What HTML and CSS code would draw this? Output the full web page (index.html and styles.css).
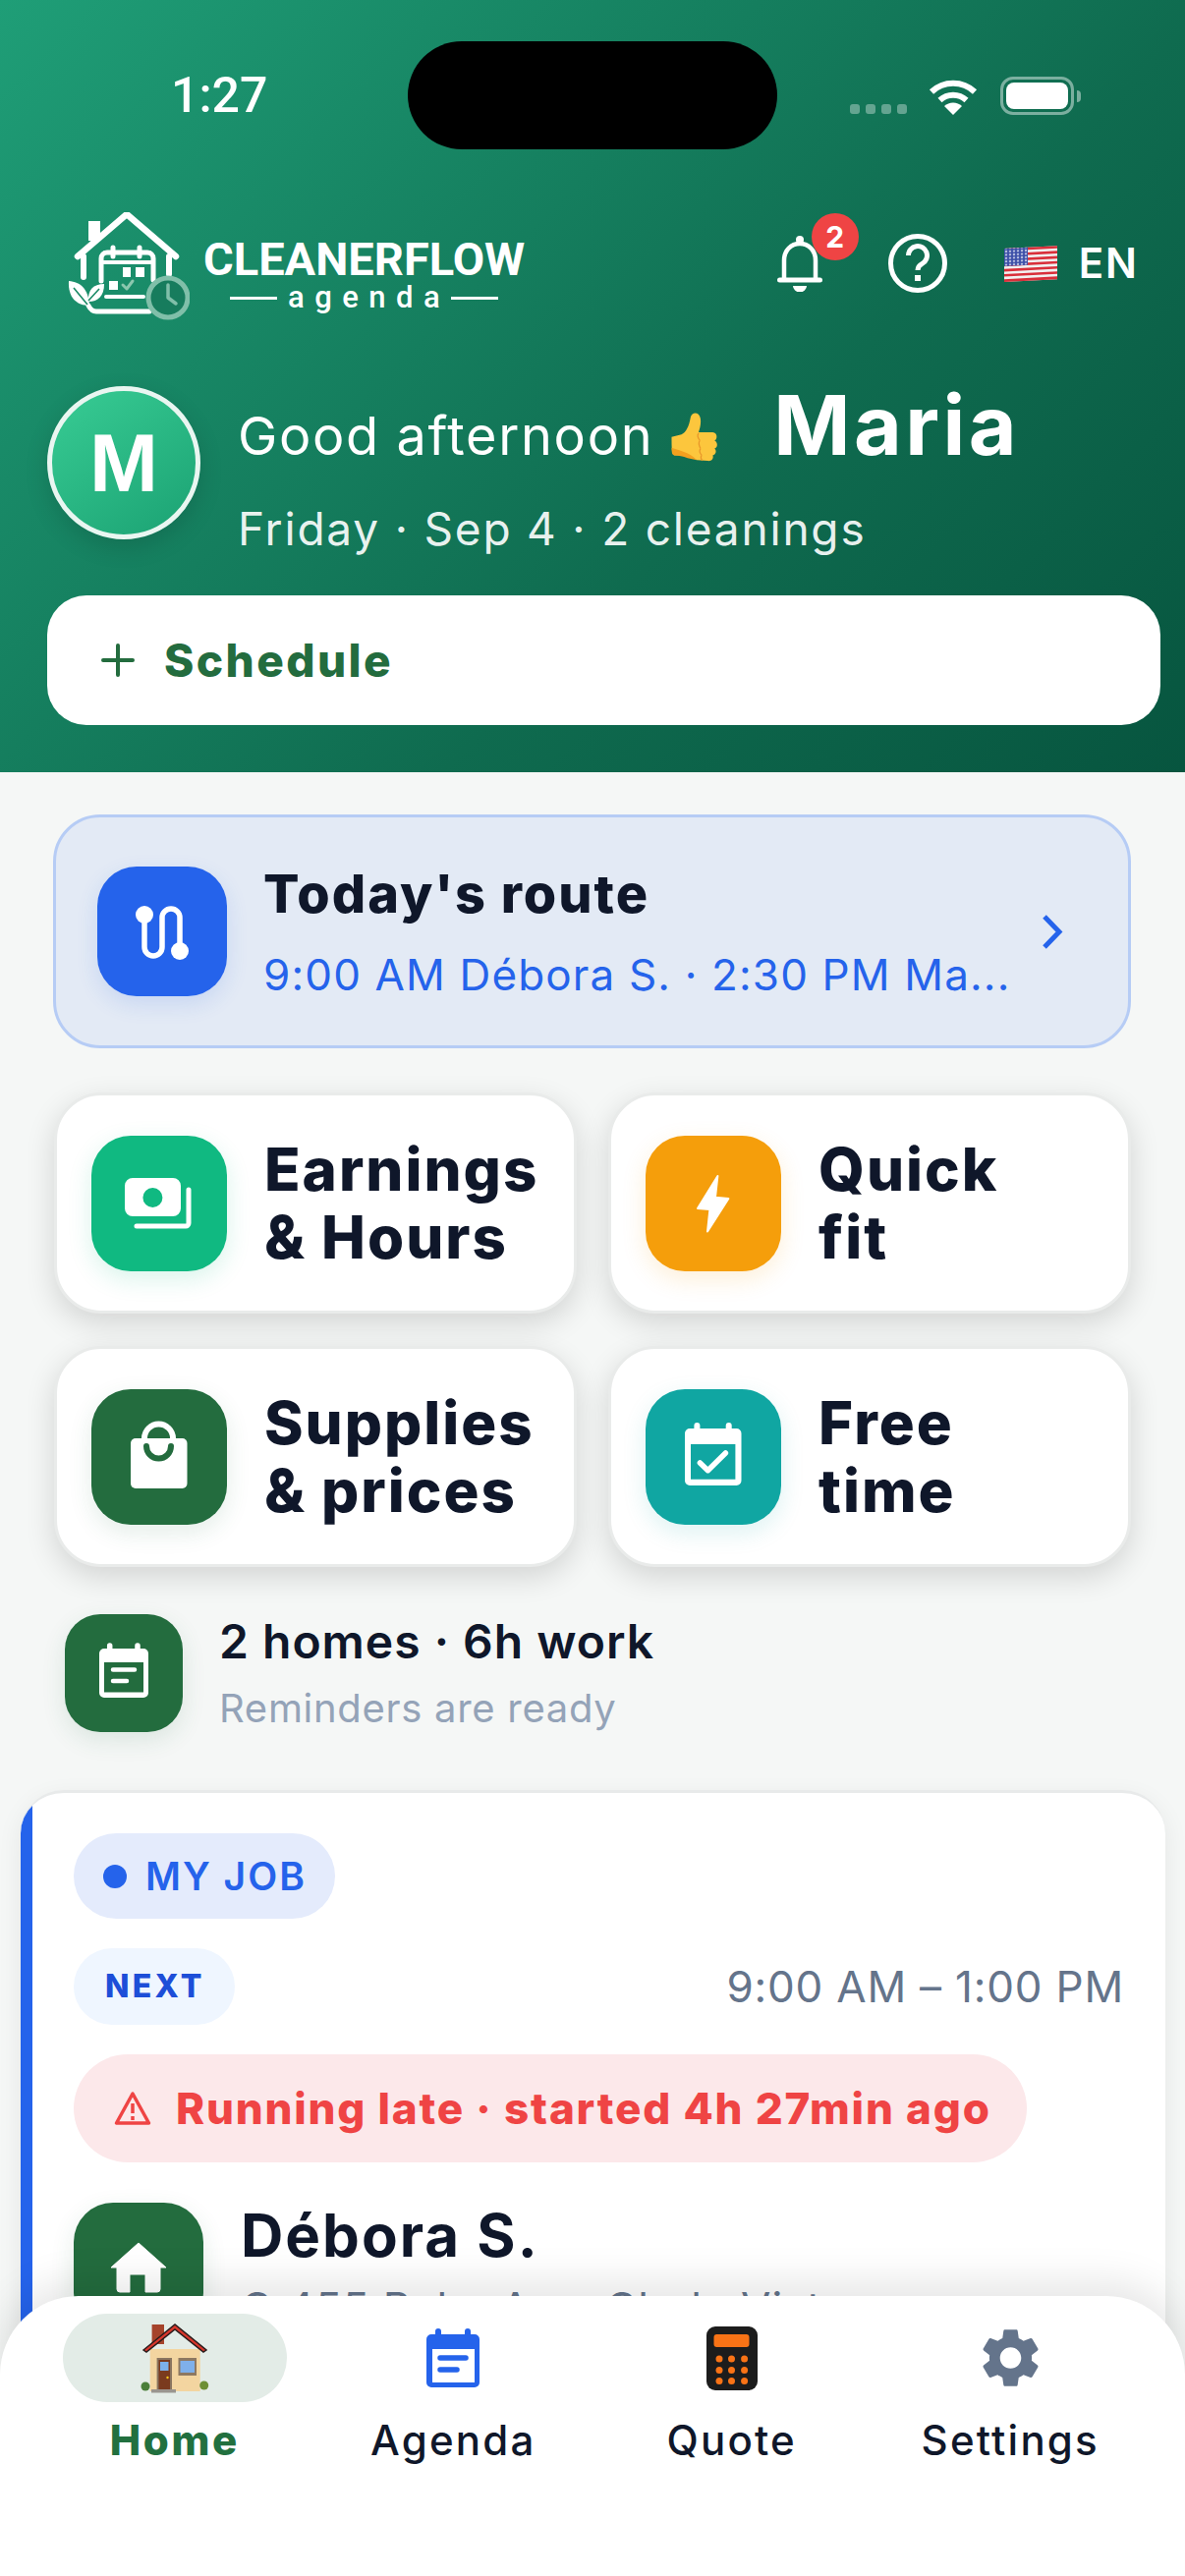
FILE: index.html
```html
<!DOCTYPE html>
<html lang="en">
<head>
    <meta charset="UTF-8">
    <meta name="viewport" content="width=device-width, initial-scale=1.0">
    <title>CleanerFlow Agenda</title>
    <link rel="stylesheet" href="styles.css">
</head>
<body>
<div class="app">
    <header class="hero">
        <div class="status">
            <span class="time">1:27</span>
            <div class="island"></div>
            <div class="status-icons">
                <div class="signal"><i></i><i></i><i></i><i></i></div>
                <svg class="wifi" viewBox="0 0 50 38"><path d="M3 14.5a32 32 0 0 1 44 0" fill="none" stroke="#fff" stroke-width="6"/><path d="M11.5 23a20 20 0 0 1 27 0" fill="none" stroke="#fff" stroke-width="6"/><path d="M25 38l-9-9a13 13 0 0 1 18 0z" fill="#fff"/></svg>
                <div class="battery"><div class="battery-fill"></div></div>
                <div class="battery-nub"></div>
            </div>
        </div>

        <div class="topbar">
            <svg class="logo-mark" viewBox="69 217 124 110">
                <g fill="none" stroke="#fff" stroke-linecap="round" stroke-linejoin="round">
                    <path d="M79 262l50-43 50 43" stroke-width="6.5"/>
                    <path d="M85 262v21M172 262v18" stroke-width="6"/>
                    <path d="M103 287v-23a6 6 0 0 1 6-6h41a6 6 0 0 1 6 6v22" stroke-width="5"/>
                    <path d="M103 268h53" stroke-width="4"/>
                    <path d="M115 253v9M142 253v9" stroke-width="5"/>
                    <path d="M108 303h38" stroke-width="4"/>
                    <path d="M90 312c2 4 4 6 8 6h54" stroke-width="5"/>
                    <path d="M125 291l4 4 6-8" stroke="#8ac7ae" stroke-width="3"/>
                </g>
                <rect x="90" y="226" width="12" height="20" fill="#fff"/>
                <rect x="125" y="273" width="8" height="10" fill="#fff"/>
                <rect x="138" y="273" width="9" height="10" fill="#fff"/>
                <rect x="111" y="287" width="9" height="9" fill="#fff"/>
                <path d="M70 287c12 1 20 8 21 25-13 0-22-8-21-25z" fill="#fff"/>
                <path d="M106 290c-11 0-17 6-16 18 10 0 16-6 16-18z" fill="#fff"/>
                <path d="M75 294l14 17M101 295l-11 12" fill="none" stroke="#1a8a66" stroke-width="1.6"/>
                <circle cx="171" cy="304" r="20" fill="#177c5d" stroke="#80bfa9" stroke-width="5"/>
                <path d="M171 291v13l8 6" fill="none" stroke="#80bfa9" stroke-width="3.5" stroke-linecap="round" stroke-linejoin="round"/>
            </svg>
            <div class="wordmark">
                <div class="brand">CLEANERFLOW</div>
                <div class="brand-sub"><i></i><span>agenda</span><i></i></div>
            </div>
            <div class="top-actions">
                <div class="bell">
                    <svg class="bell-icon" viewBox="790 239 46 57">
                        <circle cx="813" cy="243" r="4" fill="#fff"/>
                        <path d="M797 284V264c0-10 7-17 16-17s16 7 16 17v20" fill="none" stroke="#fff" stroke-width="4.5"/>
                        <path d="M792.5 284h41" fill="none" stroke="#fff" stroke-width="5" stroke-linecap="round"/>
                        <path d="M806 290h14a7 6.5 0 0 1-14 0z" fill="#fff"/>
                    </svg>
                    <span class="badge">2</span>
                </div>
                <svg class="help" viewBox="903 237 60 60">
                    <circle cx="933" cy="267" r="27.5" fill="none" stroke="#fff" stroke-width="5"/>
                    <path d="M923.5 259a9.5 9.5 0 1 1 14 8.4c-3 1.6-4.5 3.2-4.5 6.6" fill="none" stroke="#fff" stroke-width="5"/>
                    <rect x="930" y="279" width="6" height="6" fill="#fff"/>
                </svg>
                <svg class="flag" viewBox="0 0 54 40">
                    <defs>
                        <pattern id="stars" width="4" height="3.4" patternUnits="userSpaceOnUse"><rect width="4" height="3.4" fill="#3c4fa8"/><circle cx="2" cy="1.7" r="1" fill="#e6e9f5"/></pattern>
                    </defs>
                    <g transform="translate(0 3) skewY(-3)">
                        <rect y="2" width="54" height="34" fill="#f1f1f1"/>
                        <path d="M0 2h54v2.6H0zM0 7.2h54v2.6H0zM0 12.4h54V15H0zM0 17.6h54v2.6H0zM0 22.8h54v2.6H0zM0 28h54v2.6H0zM0 33.2h54v2.8H0z" fill="#d92f3a"/>
                        <rect y="2" width="24" height="18" fill="url(#stars)"/>
                    </g>
                </svg>
                <span class="lang">EN</span>
            </div>
        </div>

        <div class="greeting">
            <div class="avatar">M</div>
            <div class="greeting-text">
                <div class="hello">
                    <span class="hello-text">Good afternoon</span>
                    <svg class="thumb" viewBox="120 45 160 172">
                        <path d="M128 130l32-8c15-7 25-27 30-57 5-17 28-17 32 5 3 20-4 38-6 45h46c16 1 16 23 6 27 12 6 10 23 0 26 8 8 4 20-6 22 4 10-4 20-17 18l-35-3c-20-10-40-15-70-15-10 0-12-10-12-60z" fill="#fcc63d"/>
                        <path d="M128 165c25 10 55 12 82 40l-30-6c-15-6-30-9-40-9-10 0-12-8-12-25z" fill="#f3a01f"/>
                        <path d="M216 118c-4 5-4 14 4 24M220 142c-5 6-4 14 2 26M222 168c-4 6-3 14 4 22M226 190c-3 4-4 10 2 17" fill="none" stroke="#e8962a" stroke-width="4"/>
                    </svg>
                    <span class="hello-name">Maria</span>
                </div>
                <div class="hello-sub">Friday · Sep 4 · 2 cleanings</div>
            </div>
        </div>

        <div class="schedule">
            <svg class="plus" viewBox="0 0 34 34"><path d="M17 2v30M2 17h30" fill="none" stroke="#236c3e" stroke-width="4" stroke-linecap="round"/></svg>
            <span>Schedule</span>
        </div>
    </header>

    <main class="content">
        <div class="route-card">
            <div class="tile tile-blue">
                <svg class="tile-svg" viewBox="0 0 132 132">
                    <path d="M48 49v33a9 9 0 0 0 18 0V52a9 9 0 0 1 18 0v34" fill="none" stroke="#fff" stroke-width="5.5"/>
                    <circle cx="48" cy="49" r="9" fill="#fff"/><circle cx="84" cy="86" r="9" fill="#fff"/>
                </svg>
            </div>
            <div class="route-text">
                <div class="route-title">Today's route</div>
                <div class="route-sub">9:00 AM Débora S. · 2:30 PM Ma...</div>
            </div>
            <svg class="chevron" viewBox="0 0 22 35"><path d="M3 2l15 15.500L3 33" fill="none" stroke="#2563eb" stroke-width="5"/></svg>
        </div>

        <div class="quick-grid">
            <div class="quick-card">
                <div class="tile tile-green">
                    <svg class="tile-svg" viewBox="0 0 138 138">
                        <path fill-rule="evenodd" d="M42 43h41a8 8 0 0 1 8 8v23a8 8 0 0 1-8 8H42a8 8 0 0 1-8-8V51a8 8 0 0 1 8-8zm20.400 10a10 10 0 1 0 0 20 10 10 0 0 0 0-20z" fill="#fff"/>
                        <path d="M46 92h50a3 3 0 0 0 3-3V55" fill="none" stroke="#fff" stroke-width="5" stroke-linecap="round"/>
                    </svg>
                </div>
                <div class="quick-label">Earnings<br>&amp; Hours</div>
            </div>
            <div class="quick-card">
                <div class="tile tile-amber">
                    <svg class="tile-svg" viewBox="0 0 138 138">
                        <path d="M73.400 41L53 74l12.400 1L63 97.500 84.400 64 71 62.700z" fill="#fff" stroke="#fff" stroke-width="2" stroke-linejoin="round"/>
                    </svg>
                </div>
                <div class="quick-label">Quick<br>fit</div>
            </div>
            <div class="quick-card">
                <div class="tile tile-forest">
                    <svg class="tile-svg" viewBox="0 0 138 138">
                        <path d="M54 50a14.500 14.500 0 0 1 29 0" fill="none" stroke="#fff" stroke-width="6"/>
                        <rect x="40" y="50" width="57.500" height="51" rx="5" fill="#fff"/>
                        <path d="M56 58a12.500 12.500 0 0 0 25 0" fill="none" stroke="#236c3e" stroke-width="6" stroke-linecap="round"/>
                    </svg>
                </div>
                <div class="quick-label">Supplies<br>&amp; prices</div>
            </div>
            <div class="quick-card">
                <div class="tile tile-teal">
                    <svg class="tile-svg" viewBox="0 0 138 138">
                        <path fill-rule="evenodd" d="M45 40h47.500a5 5 0 0 1 5 5v48a5 5 0 0 1-5 5H45a5 5 0 0 1-5-5V45a5 5 0 0 1 5-5zm1 16v35.700h45.400V56z" fill="#fff"/>
                        <path d="M52.400 37v8M84.700 37v8" fill="none" stroke="#fff" stroke-width="6" stroke-linecap="round"/>
                        <path d="M55.400 75l8 7.700 18-17.700" fill="none" stroke="#fff" stroke-width="5.500" stroke-linecap="round" stroke-linejoin="round"/>
                    </svg>
                </div>
                <div class="quick-label">Free<br>time</div>
            </div>
        </div>

        <div class="summary">
            <div class="tile tile-forest tile-small">
                <svg class="tile-svg" viewBox="0 0 120 120">
                    <path fill-rule="evenodd" d="M40 35h40a5 5 0 0 1 5 5v40a5 5 0 0 1-5 5H40a5 5 0 0 1-5-5V40a5 5 0 0 1 5-5zm0 14v30.600h40V49z" fill="#fff"/>
                    <path d="M45.700 32v7M74 32v7" fill="none" stroke="#fff" stroke-width="5.500" stroke-linecap="round"/>
                    <path d="M49 56.600h22M49 68h14" fill="none" stroke="#fff" stroke-width="4.500" stroke-linecap="round"/>
                </svg>
            </div>
            <div>
                <div class="summary-title">2 homes · 6h work</div>
                <div class="summary-sub">Reminders are ready</div>
            </div>
        </div>

        <section class="job-card">
            <div class="mine-pill"><i></i>MY JOB</div>
            <div class="job-row">
                <span class="next-pill">NEXT</span>
                <span class="job-time">9:00 AM – 1:00 PM</span>
            </div>
            <div class="late-pill">
                <svg class="warn" viewBox="0 0 38 36">
                    <path d="M19 3L2.500 33h33z" fill="none" stroke="#ef4444" stroke-width="3.500" stroke-linejoin="round"/>
                    <path d="M19 13v10M19 26v4" fill="none" stroke="#ef4444" stroke-width="3.500"/>
                </svg>
                <span>Running late · started 4h 27min ago</span>
            </div>
            <div class="client">
                <div class="tile tile-forest tile-client">
                    <svg class="tile-svg" viewBox="0 0 132 132">
                        <path d="M66 41L38 66h6v22a3 3 0 0 0 3 3h10V73h16v18h12a3 3 0 0 0 3-3V66h6z" fill="#fff" stroke="#fff" stroke-width="1" stroke-linejoin="round"/>
                    </svg>
                </div>
                <div>
                    <div class="client-name">Débora S.</div>
                    <div class="client-addr">C 455 Palm Ave, Chula Vista</div>
                </div>
            </div>
        </section>
    </main>

    <nav class="tabs">
        <div class="tab tab-active">
            <div class="tab-icon">
                <svg class="ico-house" viewBox="143 2366 70 71">
                    <rect x="154.600" y="2367" width="12.400" height="20" fill="#a5432b"/>
                    <path d="M152.700 2392h51v43h-51z" fill="#f3d5a0"/>
                    <path d="M146 2393l32-26 32 26-3 2-29-23-29 23z" fill="#d9372c" stroke="#2b1c1c" stroke-width="1.500"/>
                    <rect x="159.600" y="2401" width="15.400" height="33" fill="#8a7560"/>
                    <rect x="161.500" y="2403" width="11.500" height="31" fill="#7a3a1e"/>
                    <rect x="163" y="2405" width="8.500" height="9" fill="#7cb0ea"/>
                    <circle cx="170.500" cy="2421" r="1.200" fill="#f5c518"/>
                    <rect x="181.500" y="2401" width="18.500" height="18" fill="#8d7861"/>
                    <rect x="183.500" y="2404" width="14.500" height="12" fill="#7fb0ea"/>
                    <circle cx="148" cy="2430" r="4.500" fill="#4b7f3a"/>
                    <circle cx="207.700" cy="2429" r="4.500" fill="#6d8f35"/>
                    <rect x="154" y="2433" width="25" height="3.500" fill="#9a958f"/>
                </svg>
            </div>
            <span class="tab-label">Home</span>
        </div>
        <div class="tab">
            <div class="tab-icon">
                <svg class="ico-agenda" viewBox="0 0 54 60">
                    <path fill-rule="evenodd" d="M5 6h44a5 5 0 0 1 5 5v44a5 5 0 0 1-5 5H5a5 5 0 0 1-5-5V11a5 5 0 0 1 5-5zm1 15v34h43V21z" fill="#2563eb"/>
                    <path d="M12 3v6M42 3v6" fill="none" stroke="#2563eb" stroke-width="6" stroke-linecap="round"/>
                    <path d="M14 30h26M14 42h17" fill="none" stroke="#2563eb" stroke-width="5.500" stroke-linecap="round"/>
                </svg>
            </div>
            <span class="tab-label">Agenda</span>
        </div>
        <div class="tab">
            <div class="tab-icon">
                <svg class="ico-calc" viewBox="0 0 52 65">
                    <rect width="52" height="65" rx="9" fill="#1c1c1c"/>
                    <rect x="7.500" y="8" width="36" height="13" rx="3" fill="#f97316"/>
                    <g fill="#f97316">
                        <circle cx="13" cy="33" r="3.500"/><circle cx="25.500" cy="33" r="3.500"/><circle cx="38.600" cy="33" r="3.500"/>
                        <circle cx="13" cy="44.500" r="3.500"/><circle cx="25.500" cy="44.500" r="3.500"/><circle cx="38.600" cy="44.500" r="3.500"/>
                        <circle cx="13" cy="55.600" r="3.500"/><circle cx="25.500" cy="55.600" r="3.500"/><circle cx="38.600" cy="55.600" r="3.500"/>
                    </g>
                </svg>
            </div>
            <span class="tab-label">Quote</span>
        </div>
        <div class="tab">
            <div class="tab-icon">
                <svg class="ico-gear" viewBox="2.500 2 19 20"><path fill="#64748b" d="M19.140 12.940c.04-.3.06-.61.06-.94 0-.32-.02-.64-.07-.94l2.030-1.580c.18-.14.23-.41.12-.61l-1.920-3.320c-.12-.22-.37-.29-.59-.22l-2.390.96c-.5-.38-1.030-.7-1.620-.94l-.36-2.540c-.04-.24-.24-.41-.48-.41h-3.840c-.24 0-.43.17-.47.41l-.36 2.540c-.59.24-1.130.57-1.620.94l-2.390-.96c-.22-.08-.47 0-.59.22L2.740 8.870c-.12.21-.08.47.12.61l2.030 1.580c-.05.3-.09.63-.09.94s.02.64.07.94l-2.030 1.580c-.18.14-.23.41-.12.61l1.920 3.320c.12.22.37.29.59.22l2.390-.96c.5.38 1.030.7 1.620.94l.36 2.540c.05.24.24.41.48.41h3.840c.24 0 .44-.17.47-.41l.36-2.540c.59-.24 1.130-.56 1.620-.94l2.390.96c.22.08.47 0 .59-.22l1.920-3.320c.12-.22.07-.47-.12-.61l-2.010-1.580zM12 15.600c-1.980 0-3.600-1.620-3.600-3.600s1.620-3.600 3.600-3.600 3.600 1.620 3.600 3.600-1.620 3.600-3.600 3.600z"/></svg>
            </div>
            <span class="tab-label">Settings</span>
        </div>
    </nav>
</div>
</body>
</html>
```

FILE: styles.css
```css
* {
    box-sizing: border-box;
}
body {
    margin: 0;
    font-family: Inter, "Liberation Sans", sans-serif;
    color: #0f172a;
    background: #f5f7f6;
}
.app {
    position: relative;
    width: 1206px;
    height: 2622px;
    overflow: hidden;
    background: #f5f7f6;
}

/* header */
.hero {
    height: 786px;
    background: linear-gradient(135deg, #1f9e77 0%, #0f6b4f 62%, #07553f 100%);
    color: #fff;
    overflow: hidden;
}
.status {
    display: flex;
    align-items: center;
    padding: 42px 0 0 174px;
}
.time {
    width: 241px;
    font-family: Roboto, sans-serif;
    font-size: 50px;
    font-weight: 500;
    line-height: 110px;
}
.island {
    width: 376px;
    height: 110px;
    background: #000;
    border-radius: 55px;
}
.status-icons {
    display: flex;
    align-items: flex-end;
    height: 39px;
    margin-left: 74px;
}
.signal {
    display: flex;
    gap: 6px;
    margin-right: 22px;
    margin-bottom: 1px;
}
.signal i {
    width: 10px;
    height: 10px;
    border-radius: 3px;
    background: rgba(255,255,255,0.35);
}
.wifi {
    width: 50px;
    height: 38px;
    margin-right: 23px;
}
.battery {
    width: 75px;
    height: 39px;
    padding: 3px;
    border: 3px solid rgba(255,255,255,0.45);
    border-radius: 13px;
}
.battery-fill {
    height: 100%;
    background: #fff;
    border-radius: 8px;
}
.battery-nub {
    width: 4px;
    height: 12px;
    margin: 0 0 13px 3px;
    background: rgba(255,255,255,0.45);
    border-radius: 0 4px 4px 0;
}

.topbar {
    display: flex;
    align-items: center;
    height: 110px;
    margin-top: 64px;
    padding: 0 47px 0 69px;
}
.logo-mark {
    width: 124px;
    height: 110px;
}
.wordmark {
    margin-top: 22px;
    margin-left: 14px;
    font-family: Roboto, sans-serif;
}
.brand {
    font-size: 47px;
    font-weight: 700;
    line-height: 42px;
}
.brand-sub {
    display: flex;
    align-items: center;
    justify-content: center;
    gap: 11px;
    font-size: 31px;
    font-weight: 500;
    line-height: 36px;
    letter-spacing: 10.500px;
}
.brand-sub span {
    margin-right: -10px;
}
.brand-sub i {
    width: 48px;
    height: 3px;
    background: #fff;
}
.top-actions {
    display: flex;
    align-items: center;
    margin-left: auto;
    margin-bottom: 6px;
}
.bell {
    position: relative;
    width: 46px;
    height: 57px;
}
.bell-icon {
    display: block;
    width: 46px;
    height: 57px;
}
.badge {
    position: absolute;
    top: -23px;
    left: 35px;
    width: 48px;
    height: 48px;
    border-radius: 50%;
    background: #ef4444;
    font-size: 30px;
    font-weight: 700;
    line-height: 48px;
    text-align: center;
}
.help {
    width: 60px;
    height: 60px;
    margin-left: 67px;
}
.flag {
    width: 54px;
    height: 40px;
    margin-left: 58px;
}
.lang {
    margin-left: 22px;
    font-size: 42px;
    font-weight: 600;
    letter-spacing: 2px;
    line-height: 48px;
}

.greeting {
    display: flex;
    margin-top: 67px;
    padding-left: 48px;
}
.avatar {
    flex: none;
    width: 156px;
    height: 156px;
    border: 5px solid #e9f6f1;
    border-radius: 50%;
    background: linear-gradient(145deg, #38cc94, #1ba273);
    box-shadow: 0 8px 24px rgba(0,0,0,0.14);
    font-family: "Liberation Sans", sans-serif;
    font-size: 84px;
    font-weight: 700;
    line-height: 146px;
    text-align: center;
}
.greeting-text {
    margin-left: 38px;
    padding-top: 2px;
}
.hello {
    display: flex;
    align-items: baseline;
    height: 76px;
}
.hello-text {
    font-size: 54px;
    letter-spacing: 1.650px;
    line-height: 76px;
}
.thumb {
    align-self: center;
    width: 50px;
    height: 54px;
    margin: 24px 56px 0 16px;
}
.hello-name {
    font-size: 84px;
    font-weight: 700;
    letter-spacing: 3.500px;
    line-height: 76px;
}
.hello-sub {
    margin-top: 39px;
    color: rgba(255,255,255,0.92);
    font-size: 46px;
    letter-spacing: 1.800px;
    line-height: 56px;
}
.schedule {
    display: flex;
    align-items: center;
    gap: 30px;
    height: 132px;
    margin: 40px 25px 0 48px;
    padding-left: 55px;
    border-radius: 40px;
    background: #fff;
    color: #236c3e;
    font-size: 46px;
    font-weight: 800;
    letter-spacing: 2.400px;
}
.plus {
    width: 34px;
    height: 34px;
}

/* icon tiles */
.tile {
    display: flex;
    flex: none;
    width: 138px;
    height: 138px;
    border-radius: 40px;
}
.tile-svg {
    display: block;
    width: 100%;
    height: 100%;
}
.tile-blue {
    width: 132px;
    height: 132px;
    background: #2563eb;
    box-shadow: 0 8px 22px rgba(37,99,235,0.14);
}
.tile-green {
    background: #10b981;
    box-shadow: 0 8px 24px rgba(16,185,129,0.16);
}
.tile-amber {
    background: #f59e0b;
    box-shadow: 0 8px 24px rgba(245,158,11,0.16);
}
.tile-forest {
    background: #236c3e;
    box-shadow: 0 8px 24px rgba(35,108,62,0.12);
}
.tile-teal {
    background: #10a6a2;
    box-shadow: 0 8px 24px rgba(16,166,162,0.14);
}
.tile-small {
    width: 120px;
    height: 120px;
    border-radius: 36px;
}
.tile-client {
    width: 132px;
    height: 132px;
}

/* main column */
.route-card {
    display: flex;
    align-items: center;
    height: 238px;
    margin: 43px 55px 0 54px;
    padding-left: 42px;
    border: 3px solid #b6ccf5;
    border-radius: 48px;
    background: #e3eaf5;
}
.route-text {
    flex: 1;
    margin-left: 37px;
}
.route-title {
    font-size: 54px;
    font-weight: 800;
    letter-spacing: 2px;
    line-height: 64px;
}
.route-sub {
    margin-top: 23px;
    color: #2563eb;
    font-size: 44px;
    letter-spacing: 1.150px;
    line-height: 54px;
    white-space: nowrap;
}
.chevron {
    width: 22px;
    height: 35px;
    margin-right: 66px;
}
.quick-grid {
    display: grid;
    grid-template-columns: 532px 532px;
    gap: 33px 32px;
    margin: 45px 0 0 55px;
}
.quick-card {
    display: flex;
    align-items: center;
    height: 225px;
    padding-left: 35px;
    border: 3px solid #e9ebea;
    border-radius: 48px;
    background: #fff;
    box-shadow: 0 10px 30px rgba(0,0,0,0.14);
}
.quick-label {
    margin-left: 38px;
    font-size: 60px;
    font-weight: 800;
    letter-spacing: 2px;
    line-height: 69px;
}
.summary {
    display: flex;
    align-items: center;
    gap: 37px;
    margin: 48px 0 0 66px;
}
.summary-title {
    margin-top: -2px;
    font-size: 48px;
    font-weight: 600;
    letter-spacing: 1px;
    line-height: 60px;
}
.summary-sub {
    margin-top: 14px;
    color: #94a3b8;
    font-size: 40px;
    letter-spacing: 0.700px;
    line-height: 48px;
}
.job-card {
    height: 800px;
    margin: 59px 20px 0 21px;
    padding: 41px 42px 0 54px;
    border-top: 3px solid #e8eaea;
    border-radius: 44px;
    background: linear-gradient(90deg, #2563eb 12px, #fff 12px);
    box-shadow: 0 8px 26px rgba(0,0,0,0.07);
}
.mine-pill {
    display: inline-flex;
    align-items: center;
    gap: 19px;
    height: 87px;
    padding: 0 29px 0 30px;
    border-radius: 44px;
    background: #e4ebfc;
    color: #2563eb;
    font-size: 39px;
    font-weight: 600;
    letter-spacing: 2px;
    vertical-align: top;
}
.mine-pill i {
    width: 24px;
    height: 24px;
    border-radius: 50%;
    background: #2563eb;
}
.job-row {
    display: flex;
    align-items: center;
    justify-content: space-between;
    margin-top: 30px;
}
.next-pill {
    height: 78px;
    padding: 0 30px 0 32px;
    border-radius: 39px;
    background: #eff6ff;
    color: #1d4ed8;
    font-size: 32px;
    font-weight: 800;
    letter-spacing: 3.200px;
    line-height: 78px;
}
.job-time {
    color: #64748b;
    font-size: 44px;
    letter-spacing: 0.800px;
}
.late-pill {
    display: flex;
    align-items: center;
    gap: 25px;
    width: 970px;
    height: 110px;
    margin-top: 30px;
    padding-left: 41px;
    border-radius: 55px;
    background: #fce8ea;
    color: #ef4444;
    font-size: 44px;
    font-weight: 800;
    letter-spacing: 1.800px;
}
.warn {
    width: 38px;
    height: 36px;
}
.client {
    display: flex;
    gap: 38px;
    margin-top: 41px;
}
.client-name {
    font-size: 60px;
    font-weight: 700;
    letter-spacing: 2px;
    line-height: 66px;
}
.client-addr {
    margin-top: 14px;
    color: #64748b;
    font-size: 44px;
    letter-spacing: 1px;
}

/* bottom tabs */
.tabs {
    position: absolute;
    left: 0;
    right: 0;
    bottom: 0;
    display: grid;
    grid-template-columns: repeat(4, 1fr);
    height: 285px;
    padding: 18px 36px 0;
    border-radius: 80px 80px 0 0;
    background: #fff;
    box-shadow: 0 -14px 40px rgba(0,0,0,0.1);
}
.tab {
    display: flex;
    flex-direction: column;
    align-items: center;
}
.tab-icon {
    display: flex;
    align-items: center;
    justify-content: center;
    width: 228px;
    height: 90px;
    border-radius: 45px;
}
.tab-active .tab-icon {
    background: #e3ece7;
}
.tab-label {
    margin-top: 9px;
    font-size: 42px;
    font-weight: 500;
    letter-spacing: 2.200px;
    line-height: 60px;
}
.tab-active .tab-label {
    color: #22703f;
    font-weight: 800;
    letter-spacing: 2.600px;
}
.ico-house {
    width: 70px;
    height: 71px;
}
.ico-agenda {
    width: 54px;
    height: 60px;
}
.ico-calc {
    width: 52px;
    height: 65px;
}
.ico-gear {
    width: 57px;
    height: 60px;
}
```
